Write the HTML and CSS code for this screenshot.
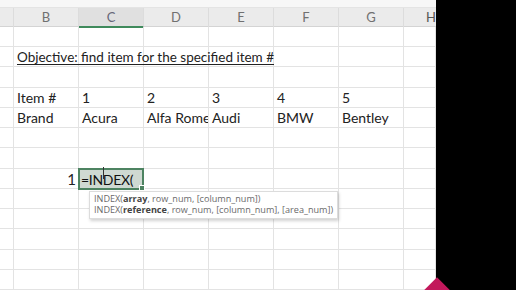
FILE: index.html
```html
<!DOCTYPE html>
<html>
<head>
<meta charset="utf-8">
<link rel="stylesheet" href="styles.css">
</head>
<body>
<div class="screen">
  <div class="sheet">
    <div class="topstrip"></div>
    <div class="colheads">
      <div class="ch"></div>
      <div class="ch">B</div>
      <div class="ch sel">C</div>
      <div class="ch">D</div>
      <div class="ch">E</div>
      <div class="ch">F</div>
      <div class="ch">G</div>
      <div class="ch last">H</div>
    </div>
    <div class="grid">
      <div class="c"></div><div class="c"></div><div class="c"></div><div class="c"></div><div class="c"></div><div class="c"></div><div class="c"></div><div class="c"></div>
      <div class="c"></div><div class="c span"><span class="u">Objective: find item for the specified item #</span></div><div class="c"></div><div class="c"></div><div class="c"></div><div class="c"></div><div class="c"></div><div class="c"></div>
      <div class="c"></div><div class="c"></div><div class="c"></div><div class="c"></div><div class="c"></div><div class="c"></div><div class="c"></div><div class="c"></div>
      <div class="c"></div><div class="c">Item #</div><div class="c">1</div><div class="c">2</div><div class="c">3</div><div class="c">4</div><div class="c">5</div><div class="c"></div>
      <div class="c"></div><div class="c">Brand</div><div class="c">Acura</div><div class="c">Alfa Rome</div><div class="c">Audi</div><div class="c">BMW</div><div class="c">Bentley</div><div class="c"></div>
      <div class="c"></div><div class="c"></div><div class="c"></div><div class="c"></div><div class="c"></div><div class="c"></div><div class="c"></div><div class="c"></div>
      <div class="c"></div><div class="c"></div><div class="c"></div><div class="c"></div><div class="c"></div><div class="c"></div><div class="c"></div><div class="c"></div>
      <div class="c"></div><div class="c num">1</div><div class="c active"><span class="formula">=INDEX(</span><span class="ibeam"></span><span class="handle"></span>
        <div class="tip">
          <div>INDEX(<b>array</b>, row_num, [column_num])</div>
          <div>INDEX(<b>reference</b>, row_num, [column_num], [area_num])</div>
        </div>
      </div><div class="c"></div><div class="c"></div><div class="c"></div><div class="c"></div><div class="c"></div>
      <div class="c"></div><div class="c"></div><div class="c"></div><div class="c"></div><div class="c"></div><div class="c"></div><div class="c"></div><div class="c"></div>
      <div class="c"></div><div class="c"></div><div class="c"></div><div class="c"></div><div class="c"></div><div class="c"></div><div class="c"></div><div class="c"></div>
      <div class="c"></div><div class="c"></div><div class="c"></div><div class="c"></div><div class="c"></div><div class="c"></div><div class="c"></div><div class="c"></div>
      <div class="c"></div><div class="c"></div><div class="c"></div><div class="c"></div><div class="c"></div><div class="c"></div><div class="c"></div><div class="c"></div>
      <div class="c"></div><div class="c"></div><div class="c"></div><div class="c"></div><div class="c"></div><div class="c"></div><div class="c"></div><div class="c"></div>
    </div>
  </div>
  <div class="black">
    <div class="diamond"></div>
  </div>
</div>
</body>
</html>
```

FILE: styles.css
```css
html, body { margin: 0; padding: 0; }
body { width: 516px; height: 290px; overflow: hidden; background: #000; }
.screen { display: flex; width: 516px; height: 290px; overflow: hidden; }
.sheet { width: 436px; background: #fff; display: flex; flex-direction: column; font-family: Lato, "Liberation Sans", sans-serif; color: #222; }
.topstrip { height: 8px; background: #f7f7f7; border-bottom: 1px solid #e4e4e4; box-sizing: border-box; }
.colheads { display: grid; grid-template-columns: 14px 65px 65px 65px 65px 65px 65px 32px; height: 19px; background: #ebebeb; border-bottom: 1px solid #d4d4d4; box-sizing: border-box; }
.ch { font-size: 13px; color: #707070; text-align: center; line-height: 18px; border-right: 1px solid #dcdcdc; }
.ch.sel { background: #e0e0e0; border-bottom: 2px solid #3f8a5c; color: #667; }
.ch.last { border-right: none; text-align: left; padding-left: 22px; color: #555; }
.grid { display: grid; grid-template-columns: 14px 65px 65px 65px 65px 65px 65px 32px; grid-auto-rows: 20.25px; }
.c { border-right: 1px solid #e3e3e3; border-bottom: 1px solid #e3e3e3; font-size: 14px; line-height: 20px; padding-left: 3px; white-space: nowrap; overflow: hidden; position: relative; }
.c.span { overflow: visible; z-index: 1; font-size: 13.5px; }
.u { text-decoration: underline; text-underline-offset: 2px; }
.num { text-align: right; padding-right: 2px; padding-left: 0; font-size: 15px; }
.active { overflow: visible; z-index: 2; background: #cfd9d2; border: 2px solid #4d8361; margin: -1px 0 -1px -1px; padding-left: 1px; }
.formula { font-size: 14px; letter-spacing: -0.3px; color: #111; line-height: 18px; }
.ibeam { position: absolute; left: 23px; top: -3px; width: 1px; height: 12px; background: #333; }
.handle { position: absolute; right: -3px; bottom: -3px; width: 4px; height: 4px; background: #4d8361; border: 1px solid #fff; }
.tip { position: absolute; left: 9px; top: 21px; background: #fff; border: 1px solid #dcdcdc; box-shadow: 1px 2px 3px rgba(0,0,0,0.18); padding: 1px 4px 2px 4px; font-size: 9.1px; line-height: 11.5px; color: #6a6a6a; font-family: "Open Sans", sans-serif; white-space: nowrap; }
.tip b { color: #444; }
.black { flex: 1; background: #000; position: relative; }
.diamond { position: absolute; left: -8px; top: 281px; width: 18px; height: 18px; background: #c2185b; transform: rotate(45deg); }
```
